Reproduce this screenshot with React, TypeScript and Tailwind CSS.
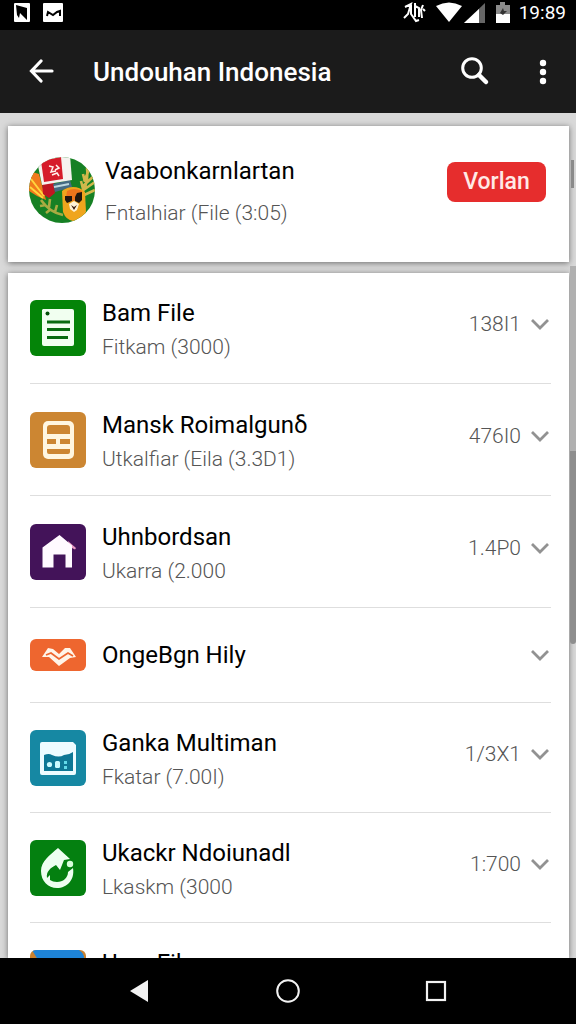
import type { ReactNode } from "react";

type Item = {
  title: string;
  detail?: string;
  size?: string;
  height: string;
  tile: string;
  icon: ReactNode;
};

const ITEMS: Item[] = [
  {
    title: "Bam File",
    detail: "Fitkam (3000)",
    size: "138I1",
    height: "h-[111px]",
    tile: "h-14 bg-[#048408]",
    icon: (
      <svg viewBox="0 0 56 56" className="size-14" aria-hidden="true">
        <path d="M13 9h29q2 0 2 2v33q0 2-2 2H14q-2 0-2-2V10z" fill="#f1fff0" />
        <circle cx="17.5" cy="13.5" r="2" fill="#04500a" />
        <path d="M17 22h23M17 29.500h23M17 37.500h21" stroke="#086b10" strokeWidth="3" />
      </svg>
    ),
  },
  {
    title: "Mansk Roimalgunδ",
    detail: "Utkalfiar (Eila (3.3D1)",
    size: "476I0",
    height: "h-28",
    tile: "h-14 bg-[#cc8632]",
    icon: (
      <svg viewBox="0 0 56 56" className="size-14" aria-hidden="true">
        <rect x="13" y="9" width="31" height="38" rx="5" fill="#fff6e0" />
        <path
          d="M20 13h17q3 0 3 3v6H17v-6q0-3 3-3zM17 27h9v5h-9zM30 27h10v5H30zM17 37h23v3q0 2-2 2H19q-2 0-2-2z"
          fill="#cc8632"
        />
      </svg>
    ),
  },
  {
    title: "Uhnbordsan",
    detail: "Ukarra (2.000",
    size: "1.4P0",
    height: "h-28",
    tile: "h-14 bg-[#431359]",
    icon: (
      <svg viewBox="0 0 56 56" className="size-14" aria-hidden="true">
        <path d="M38 17l8 7-1 1.500-6-3z" fill="#e89ac4" />
        <path d="M29.500 11L42 21.500V43.500H35.500V30.500H23.500V43.500H12.500V23.500z" fill="#fffaff" />
      </svg>
    ),
  },
  {
    title: "OngeBgn Hily",
    height: "h-[95px]",
    tile: "h-8 bg-[#ee662f]",
    icon: (
      <svg viewBox="0 0 56 32" className="h-8 w-14" aria-hidden="true">
        <path
          d="M12 18l6-9 5 1 6 5 6-6h5l6 9-6 1-11 8-10-9z"
          fill="#fff4e8"
        />
        <path d="M16 16l5-2 8 6 9-6 5 3" stroke="#ee662f" strokeWidth="1.700" fill="none" />
      </svg>
    ),
  },
  {
    title: "Ganka Multiman",
    detail: "Fkatar (7.00I)",
    size: "1/3X1",
    height: "h-[110px]",
    tile: "h-14 bg-[#1688a3]",
    icon: (
      <svg viewBox="0 0 56 56" className="size-14" aria-hidden="true">
        <path d="M12 12h31l3 3v28q0 2-2 2H12q-2 0-2-2V14q0-2 2-2z" fill="#eefcff" />
        <path d="M14 25q5-2 8 0 7 3 12 0 5 0 9-3v19H14z" fill="#0e7895" />
        <circle cx="19.500" cy="34.500" r="2.600" fill="#cbfbff" />
        <rect x="25" y="31" width="5" height="7" rx="1.500" fill="#cbfbff" />
        <path d="M34 31h3v3h-3zM34 36h3v3h-3z" fill="#62dbe9" />
      </svg>
    ),
  },
  {
    title: "Ukackr Ndoiunadl",
    detail: "Lkaskm (3000",
    size: "1:700",
    height: "h-[110px]",
    tile: "h-14 bg-[#048010]",
    icon: (
      <svg viewBox="0 0 56 56" className="size-14" aria-hidden="true">
        <path
          d="M28 8C20 15 11 21 11 31c0 10 7 17 16 17 10 0 18-8 16-20l-5 4c0 6-5 10-11 10-3 0-5-1-7-2v-5l-3 3c-1-6 3-10 9-13l4 5 4-10 6-1z"
          fill="#edfff0"
        />
        <circle cx="40" cy="24" r="3.200" fill="#d8ffdc" />
      </svg>
    ),
  },
  {
    title: "User File",
    detail: "",
    height: "h-[110px]",
    tile: "h-14 bg-[#c9812f]",
    icon: (
      <svg viewBox="0 0 56 56" className="size-14" aria-hidden="true">
        <path d="M2 0h47q5 3 5 8v40H8V10z" fill="#1e84d8" />
      </svg>
    ),
  },
];

function Emblem() {
  return (
    <svg viewBox="0 0 66 66" className="size-[66px] shrink-0" role="img" aria-label="Emblem">
      <defs>
        <clipPath id="disc">
          <circle cx="33" cy="33" r="33" />
        </clipPath>
      </defs>
      <g clipPath="url(#disc)">
        <rect width="66" height="66" fill="#168024" />
        <path d="M0 14l10 3 7 26-9-4L0 34z" fill="#f07a1c" />
        <path d="M2 22l13 17M1 30l13 11" stroke="#ffd53d" strokeWidth="2" />
        <path
          d="M51 38q9-10 7-27M53 34l13-9M54 29l12-11M53 39l13-6M55 24l6-13M54 32l-2-8M56 25l-2-8"
          stroke="#d2b84c"
          strokeWidth="2.600"
          fill="none"
        />
        <path
          d="M12 43q8 12 22 15M17 48l-6 1M22 52l-5 4M20 50l1-8M26 55l2-7"
          stroke="#a9ab42"
          strokeWidth="2.600"
          fill="none"
        />
        <path d="M13 24l12 2 1 10-6 5-6-4z" fill="#c01622" />
        <path d="M24 27l17-4 2 7-17 5z" fill="#456b83" />
        <path d="M25 30l15-3" stroke="#bdd8df" strokeWidth="2" />
        <path d="M8 4l33-6 2 25-30 5z" fill="#f6f2ef" />
        <path d="M12 4l20-4 2 22-19 3z" fill="#d61c2a" />
        <path
          d="M20 9l4 1-2 5 5-1M23 18l5-2 2 3M27 8l3 3-4 2"
          stroke="#fff1ec"
          strokeWidth="1.500"
          fill="none"
        />
        <path d="M33 34q5-4 11-4 7 0 12 5l1 20q-5 9-13 9-7-1-10-9z" fill="#efa51d" />
        <path d="M38 34q7-4 15 0l-2 8-7 2-7-3z" fill="#ee741b" />
        <path d="M36 39h7v5l-5 2-2-3zM46 40l2-4 5-1v8l-3 3-4-2z" fill="#21160f" />
        <path d="M40 47l5-3 5 3-2 6-3 2-4-3z" fill="#fff3d6" />
        <path d="M42 48l3 2 3-2-3 5z" fill="#3a1c10" />
      </g>
    </svg>
  );
}

function StatusBar() {
  return (
    <div className="flex h-[30px] shrink-0 items-center justify-between bg-black pr-2.5 pb-1 pl-3.5 text-white">
      <svg viewBox="0 0 50 20" className="h-5 w-[50px]" aria-hidden="true">
        <rect width="16" height="19" rx="1" fill="#fff" />
        <path d="M2 2l11 3v12l-7-7-1 5-2-3z" fill="#000" />
        <rect x="29" width="20" height="19" rx="1" fill="#fff" />
        <path d="M33 13l1-4 5 3 4-3 3-1v5" stroke="#000" strokeWidth="2" fill="none" />
      </svg>
      <div className="flex items-center gap-2">
        <svg viewBox="0 0 108 24" className="h-6 w-[108px]" aria-hidden="true">
          <path
            d="M2 6l6-3-3 10-4 4M8 4v9l5 7 3-1M12 2v14M12 5l4 2v9M20 4l-2 5 1 8M20 8l2 2"
            stroke="#fff"
            strokeWidth="2"
            fill="none"
          />
          <path d="M33 5q13-7 26 0L46 21z" fill="#fff" />
          <path d="M82 2v20H61z" fill="#666" />
          <path d="M76 8v14H61z" fill="#fff" />
          <path d="M93 4h4V1h5v3h5v10H93z" fill="#8b8b8b" />
          <path d="M93 13h14v9H93z" fill="#fff" />
          <path d="M97 12l3-5 1 3h3l-4 4z" fill="#333" />
        </svg>
        <span className="text-[19px] leading-6">19:89</span>
      </div>
    </div>
  );
}

function AppBar() {
  return (
    <header className="flex h-[83px] shrink-0 items-center bg-[#1b1b1b] pr-5 pl-[29px] text-white">
      <button type="button" aria-label="Back">
        <svg viewBox="0 0 26 26" className="size-[26px]" aria-hidden="true">
          <path
            d="M23 12H3M12 2L2.500 12 12 22"
            stroke="currentColor"
            strokeWidth="3.200"
            strokeLinecap="round"
            fill="none"
          />
        </svg>
      </button>
      <h1 className="flex-1 pl-[38px] text-[26px] leading-8 font-medium">Undouhan Indonesia</h1>
      <button type="button" aria-label="Search">
        <svg viewBox="0 0 30 30" className="size-[30px]" aria-hidden="true">
          <circle cx="12" cy="11" r="9.300" stroke="currentColor" strokeWidth="3" fill="none" />
          <path d="M19 18l7 7" stroke="currentColor" strokeWidth="4.500" strokeLinecap="round" />
        </svg>
      </button>
      <button type="button" aria-label="More options" className="ml-10">
        <svg viewBox="0 0 26 26" className="size-[26px]" aria-hidden="true">
          <circle cx="13" cy="4" r="3.200" fill="currentColor" />
          <circle cx="13" cy="13" r="3.200" fill="currentColor" />
          <circle cx="13" cy="22" r="3.200" fill="currentColor" />
        </svg>
      </button>
    </header>
  );
}

function Row({ item }: { item: Item }) {
  const twoLines = item.detail !== undefined;

  return (
    <li className={`flex shrink-0 items-center border-b border-[#dedede] ${item.height}`}>
      <div className={`w-14 shrink-0 overflow-hidden rounded-md ${item.tile}`}>{item.icon}</div>
      <div className={`min-w-0 flex-1 pl-4 ${twoLines ? "pt-1" : ""}`}>
        <h2 className="text-2xl leading-[34px] text-black">{item.title}</h2>
        {twoLines && (
          <p className="min-h-[34px] text-[21px] leading-[34px] font-light text-[#555]">
            {item.detail}
          </p>
        )}
      </div>
      <div className={`flex items-center gap-2.5 ${twoLines ? "pb-2" : ""}`}>
        {item.size && (
          <span className="text-[21px] leading-6 font-light text-[#555]">{item.size}</span>
        )}
        <button type="button" aria-label={`Expand ${item.title}`}>
          <svg viewBox="0 0 20 12" className="h-3 w-5" aria-hidden="true">
            <path d="M1 2l8 8 8-8" stroke="#929292" strokeWidth="2.800" fill="none" />
          </svg>
        </button>
      </div>
    </li>
  );
}

function NavBar() {
  return (
    <nav className="flex h-[66px] shrink-0 items-center justify-center gap-[122px] bg-black text-[#f2f2f2]">
      <button type="button" aria-label="Back">
        <svg viewBox="0 0 26 26" className="size-[26px]" aria-hidden="true">
          <path d="M21 2v22L3 13z" fill="currentColor" />
        </svg>
      </button>
      <button type="button" aria-label="Home">
        <svg viewBox="0 0 26 26" className="size-[26px]" aria-hidden="true">
          <circle cx="13" cy="13" r="10.800" stroke="currentColor" strokeWidth="2" fill="none" />
        </svg>
      </button>
      <button type="button" aria-label="Recent apps">
        <svg viewBox="0 0 26 26" className="size-[26px]" aria-hidden="true">
          <rect
            x="4"
            y="4"
            width="18"
            height="18"
            stroke="currentColor"
            strokeWidth="2.200"
            fill="none"
          />
        </svg>
      </button>
    </nav>
  );
}

export default function App() {
  return (
    <div className="flex h-screen flex-col overflow-hidden bg-[#d9d9d9] font-[Roboto,sans-serif]">
      <StatusBar />
      <AppBar />

      <main className="flex min-h-0 flex-1 overflow-hidden bg-[#d9d9d9] pl-2">
        <div className="flex min-w-0 flex-1 flex-col gap-[11px] pt-[13px]">
          <section className="flex h-[136px] shrink-0 items-center bg-white pr-[23px] pb-2 pl-[21px] shadow-[0_1px_6px_rgba(0,0,0,0.5)]">
            <Emblem />
            <div className="min-w-0 flex-1 pt-1 pl-[10px]">
              <h2 className="pb-2 text-2xl leading-[34px] text-black">Vaabonkarnlartan</h2>
              <p className="text-[21px] leading-[34px] font-light text-[#555]">
                Fntalhiar (File (3:05)
              </p>
            </div>
            <button
              type="button"
              className="mb-4 h-10 w-[99px] rounded-lg bg-[#e62d2d] text-[23px] leading-8 font-medium text-[#ffe9e6]"
            >
              Vorlan
            </button>
          </section>

          <ul className="flex min-h-0 flex-1 flex-col bg-white pr-[18px] pl-[22px] shadow-[0_1px_6px_rgba(0,0,0,0.5)]">
            {ITEMS.map((item) => (
              <Row key={item.title} item={item} />
            ))}
          </ul>
        </div>

        <div className="flex w-[7px] shrink-0 flex-col items-end" aria-hidden="true">
          <div className="mt-[47px] mr-0.5 h-7 w-[3px] bg-[#8a8a8a]" />
          <div className="mt-[78px] h-[185px] w-1.5 bg-[#b0b0b0]" />
          <div className="h-[193px] w-1.5 rounded-b-sm bg-[#8e8e8e]" />
        </div>
      </main>

      <NavBar />
    </div>
  );
}
